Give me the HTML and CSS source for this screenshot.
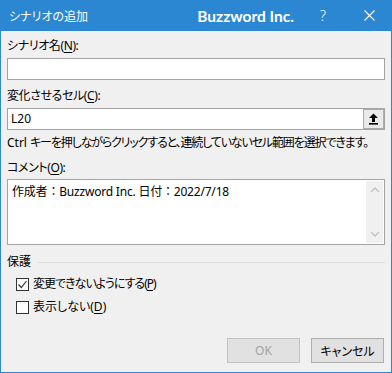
FILE: index.html
```html
<!DOCTYPE html>
<html lang="ja">
<head>
<meta charset="utf-8">
<link rel="stylesheet" href="styles.css">
</head>
<body>
<div class="dialog">
  <div class="titlebar">
    <span class="title">シナリオの追加</span>
    <span class="brand">Buzzword Inc.</span>
    <span class="tbtn help">?</span>
    <span class="tbtn close">
      <svg width="11" height="11" viewBox="0 0 11 11"><path d="M0.5 0.5 L10.5 10.5 M10.5 0.5 L0.5 10.5" stroke="#fff" stroke-width="1.1" fill="none"/></svg>
    </span>
  </div>
  <div class="content">
    <div class="label l1">シナリオ名(<span class="u">N</span>):</div>
    <div class="field"></div>

    <div class="label l2">変化させるセル(<span class="u">C</span>):</div>
    <div class="field refbox">
      <span class="val">L20</span>
      <span class="refbtn">
        <svg width="11" height="12" viewBox="0 0 11 12"><path d="M5.5 0.5 L10 5 L7 5 L7 9 L4 9 L4 5 L1 5 Z" fill="#000"/><rect x="1" y="10" width="9" height="1.6" fill="#000"/></svg>
      </span>
    </div>
    <div class="hint"><span class="latin">Ctrl </span><span class="jp">キーを押しながらクリックすると、連続していないセル範囲を選択できます。</span></div>

    <div class="label l3">コメント(<span class="u">O</span>):</div>
    <div class="memo">
      <div class="memotext">作成者：Buzzword Inc. 日付：2022/7/18</div>
      <div class="scroll">
        <svg width="10" height="6" viewBox="0 0 10 6"><path d="M1 5 L5 1 L9 5" stroke="#c2c2c2" stroke-width="1.3" fill="none"/></svg>
        <svg width="10" height="6" viewBox="0 0 10 6"><path d="M1 1 L5 5 L9 1" stroke="#c2c2c2" stroke-width="1.3" fill="none"/></svg>
      </div>
    </div>

    <div class="group">
      <span class="gtitle">保護</span>
      <span class="gline"></span>
    </div>
    <div class="check c1">
      <span class="box">
        <svg width="11" height="11" viewBox="0 0 11 11"><path d="M1.5 5.5 L4.3 8.5 L9.5 2" stroke="#333" stroke-width="1.2" fill="none"/></svg>
      </span>
      <span class="narrow">変更できないようにする(<span class="u">P</span>)</span>
    </div>
    <div class="check c2">
      <span class="box"></span>
      <span>表示しない(<span class="u">D</span>)</span>
    </div>

    <div class="buttons">
      <span class="btn ok">OK</span>
      <span class="btn cancel">キャンセル</span>
    </div>
  </div>
</div>
</body>
</html>
```
FILE: styles.css
```css
* { box-sizing: border-box; }
html, body { margin: 0; padding: 0; background: #f0f0f0; }
body {
  font-family: "Noto Sans", "Noto Sans CJK JP", sans-serif;
  font-size: 12px;
  color: #000;
  font-feature-settings: "palt";
}
.dialog {
  width: 392px;
  height: 373px;
  border: 1px solid #2b87d1;
  border-top: none;
  background: #f0f0f0;
  display: flex;
  flex-direction: column;
}
.titlebar {
  height: 31px;
  margin: 0 -1px;
  background: #2b87d1;
  color: #fff;
  display: flex;
  align-items: center;
}
.title {
  padding-left: 9px;
  font-family: "Noto Sans CJK JP", sans-serif;
  font-size: 12px;
  line-height: 16px;
}
.brand {
  margin-left: auto;
  margin-right: 6px;
  font-family: Lato, "Noto Sans", sans-serif;
  font-weight: bold;
  font-size: 15.5px;
}
.tbtn {
  width: 46px;
  height: 31px;
  display: flex;
  align-items: center;
  justify-content: center;
}
.help { font-size: 14px; font-family: "Noto Sans", sans-serif; font-weight: 300; }
.content {
  flex: 1;
  padding: 0 6px;
  display: flex;
  flex-direction: column;
}
.label, .hint { line-height: 16px; height: 16px; white-space: nowrap; }
.label { letter-spacing: -0.4px; }
.u { text-decoration: underline; text-underline-offset: 2px; }
.l1 { margin-top: 7px; margin-bottom: 4px; }
.field {
  height: 22px;
  background: #fff;
  border: 1px solid #a3a3a3;
}
.l2 { margin-top: 8px; margin-bottom: 4px; }
.refbox {
  display: flex;
  align-items: center;
  padding-left: 3px;
}
.val { flex: 1; line-height: 16px; }
.refbtn {
  width: 21px;
  height: 20px;
  border: 1px solid #adadad;
  background: #e9e9e9;
  display: flex;
  align-items: center;
  justify-content: center;
}
.hint { margin-top: 5px; }
.hint .jp { letter-spacing: -1.15px; }
.l3 { margin-top: 9px; margin-bottom: 3px; }
.memo {
  height: 66px;
  background: #fff;
  border: 1px solid #a3a3a3;
  display: flex;
  padding: 1px;
}
.memotext {
  flex: 1;
  padding: 3px 0 0 3px;
  line-height: 16px;
  font-feature-settings: normal;
  letter-spacing: -0.2px;
}
.scroll {
  width: 17px;
  background: #f0f0f0;
  display: flex;
  flex-direction: column;
  align-items: center;
  justify-content: space-between;
  padding: 6px 0 6px;
}
.group {
  margin-top: 9px;
  height: 16px;
  display: flex;
  align-items: center;
}
.gtitle { line-height: 16px; }
.gline {
  flex: 1;
  height: 1px;
  background: #dcdcdc;
  margin-left: 7px;
}
.check {
  height: 18px;
  display: flex;
  align-items: center;
  padding-left: 9px;
  line-height: 16px;
}
.narrow { letter-spacing: -1px; }
.c1 { margin-top: 5px; }
.c2 { margin-top: 5px; }
.box {
  width: 13px;
  height: 13px;
  border: 1px solid #333;
  background: #fff;
  margin-right: 4px;
  display: flex;
  align-items: center;
  justify-content: center;
}
.buttons {
  margin-top: 22px;
  display: flex;
  justify-content: flex-end;
  gap: 11px;
  padding-right: 1px;
}
.btn {
  width: 73px;
  height: 25px;
  display: flex;
  align-items: center;
  justify-content: center;
  background: #e1e1e1;
  border: 1px solid #adadad;
}
.ok { color: #a3a3a3; border-color: #c2c2c2; }
```
